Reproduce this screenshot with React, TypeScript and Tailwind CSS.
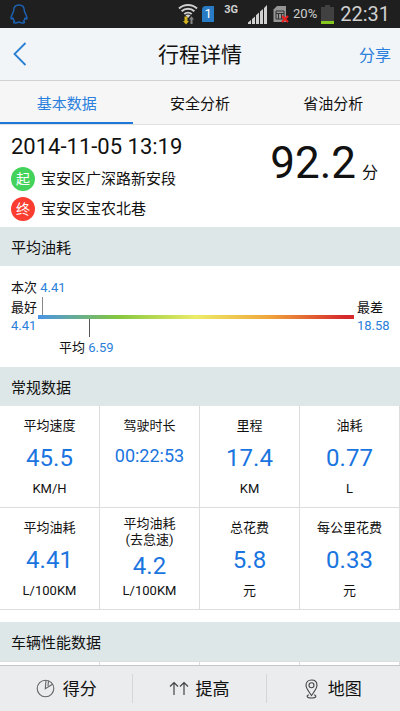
import React, { useState } from "react";

interface Metric {
  label: string;
  note?: string;
  value: string;
  unit?: string;
}

const TABS = ["基本数据", "安全分析", "省油分析"];

const METRICS: Metric[] = [
  { label: "平均速度", value: "45.5", unit: "KM/H" },
  { label: "驾驶时长", value: "00:22:53" },
  { label: "里程", value: "17.4", unit: "KM" },
  { label: "油耗", value: "0.77", unit: "L" },
  { label: "平均油耗", value: "4.41", unit: "L/100KM" },
  { label: "平均油耗", note: "(去怠速)", value: "4.2", unit: "L/100KM" },
  { label: "总花费", value: "5.8", unit: "元" },
  { label: "每公里花费", value: "0.33", unit: "元" },
];

function StatusBar() {
  return (
    <div className="flex h-7 shrink-0 items-center bg-[#1f1f1f] pr-2.5 pl-2.5 text-[#d0d0d0]">
      <svg width="18" height="20" viewBox="0 0 18 20" fill="none" stroke="#1d62b5" strokeWidth="1.4" strokeLinejoin="round">
        <path d="M9 1C5.600 1 3.700 3.300 3.700 6.400C3.700 8.600 1 11 1 14.200C1 15.500 2 15.300 3 14C3.200 15.300 3.800 16.300 4.600 17C3.200 17.400 3 19 5 19C6.800 19 8 18.600 9 17.900C10 18.600 11.200 19 13 19C15 19 14.800 17.400 13.400 17C14.200 16.300 14.800 15.300 15 14C16 15.300 17 15.500 17 14.200C17 11 14.300 8.600 14.300 6.400C14.300 3.300 12.400 1 9 1Z" />
      </svg>

      <div className="ml-auto flex items-center">
        {/* wifi */}
        <svg width="20" height="22" viewBox="0 0 20 22" fill="none">
          <g stroke="#d0d0d0" strokeWidth="2">
            <path d="M1 5.500C6 0.800 14 0.800 19 5.500" />
            <path d="M3.600 8.300C7.200 5 12.800 5 16.400 8.300" />
            <path d="M6.300 11C8.400 9.200 11.600 9.200 13.700 11" />
          </g>
          <path d="M7.500 12.300Q10 10.600 12.500 12.300L10 15Z" fill="#d0d0d0" />
          <path d="M6.500 13.500H9.500V18H11L8 21.500L5 18H6.500Z" fill="#d3b41d" />
          <path d="M12.500 21V16.500H11L13.500 13.200L16 16.500H14.500V21Z" fill="#858585" />
        </svg>
        {/* sim 1 */}
        <div className="ml-1 flex h-4 w-3 items-center justify-center rounded-tl-sm bg-[#287bc4] text-[13px] leading-4 text-white">
          1
        </div>
        <span className="ml-2.5 self-start pt-0.5 text-[11px] leading-4 font-bold">3G</span>
        {/* signal */}
        <svg className="ml-2.5" width="19" height="19" viewBox="0 0 19 19" fill="#d0d0d0">
          <path d="M0 19V17.500L3 15V19ZM4 19V14L7 11.500V19ZM8 19V10.200L11 7.500V19ZM12 19V6.500L15 4V19ZM16 19V3L19 0V19Z" />
        </svg>
        {/* sim missing */}
        <svg className="ml-1.5" width="16" height="18" viewBox="0 0 16 18">
          <path d="M4 1H13V17H0.500V4.500Z" fill="#949494" />
          <path d="M3 6H11V14H3ZM3 8.500H11M5.500 8.500V14M8.500 8.500V14" fill="none" stroke="#333" strokeWidth="1" />
          <path d="M9 11L15 17M15 11L9 17" stroke="#ee1c1c" strokeWidth="2" />
        </svg>
        <span className="ml-1 text-[13px] leading-5">20%</span>
        {/* battery */}
        <svg className="ml-1" width="13" height="19" viewBox="0 0 13 19">
          <path d="M4 0H9V2H13V19H0V2H4Z" fill="#414141" />
          <path d="M0 16H13V19H0Z" fill="#86c81f" />
        </svg>
        <span className="ml-1.5 text-xl leading-7">22:31</span>
      </div>
    </div>
  );
}

function SectionTitle({ children }: { children: React.ReactNode }) {
  return (
    <h2 className="bg-[#dee7e8] px-[11px] pt-[9px] pb-1.5 text-[15px] leading-6">
      {children}
    </h2>
  );
}

function FuelScale() {
  return (
    <div className="px-[11px] pt-[13px] pb-2.5 text-[13px] leading-[18px]">
      <p>
        本次 <span className="text-[#2a7fd8]">4.41</span>
      </p>
      <div className="mt-0.5 flex items-center">
        <div className="w-[27px] whitespace-nowrap">
          <p>最好</p>
          <p className="text-[#2a7fd8]">4.41</p>
        </div>
        <div className="relative h-1 flex-1 bg-[linear-gradient(to_right,#4a94e6_0%,#84c63e_25%,#ecec68_50%,#f0a63c_73%,#d6292b_97%)]">
          <span className="absolute bottom-full left-1 h-[18px] w-px bg-[#888]" />
          <span className="absolute top-full left-[16%] h-[18px] w-px bg-[#555]" />
        </div>
        <div className="ml-[3px] w-8 whitespace-nowrap">
          <p>最差</p>
          <p className="text-[#2a7fd8]">18.58</p>
        </div>
      </div>
      <p className="mt-1 ml-12">
        平均 <span className="text-[#2a7fd8]">6.59</span>
      </p>
    </div>
  );
}

function MetricCell({ metric }: { metric: Metric }) {
  const { label, note, value, unit } = metric;

  return (
    <div className="flex h-[102px] flex-col items-center border-r border-b border-[#dcdddd] text-[13px] leading-4">
      <div className={note ? "pt-2 text-center" : "pt-3 text-center"}>
        <p>{label}</p>
        {note && <p>{note}</p>}
      </div>
      <p
        className={`text-[#1a75e0] ${
          unit ? "text-2xl leading-8" : "text-lg leading-7"
        } ${note ? "mt-0.5" : "mt-2"}`}
      >
        {value}
      </p>
      {unit && <p className="mt-auto mb-2.5">{unit}</p>}
    </div>
  );
}

export default function App() {
  const [activeTab, setActiveTab] = useState(0);

  return (
    <div className="flex h-screen flex-col overflow-hidden bg-white font-['Roboto','Noto_Sans_CJK_SC',sans-serif] text-[#111]">
      <StatusBar />

      {/* Title bar */}
      <header className="grid h-[53px] shrink-0 grid-cols-3 items-center border-b border-[#cfd1d3] bg-[#f2f5f7] px-[9px]">
        <button aria-label="返回" className="w-10 pl-1">
          <svg width="14" height="24" viewBox="0 0 14 24" fill="none" stroke="#2680d4" strokeWidth="1.8">
            <path d="M12.500 1L1.500 12L12.500 23" />
          </svg>
        </button>
        <h1 className="pt-0.5 text-center text-[21px] leading-7">行程详情</h1>
        <button className="justify-self-end pt-1 text-base leading-6 text-[#2a80dc]">分享</button>
      </header>

      {/* Tabs */}
      <nav className="grid h-11 shrink-0 grid-cols-3 border-b border-[#dfdfdf] bg-[#f6f6f6]">
        {TABS.map((tab, index) => (
          <button
            key={tab}
            onClick={() => setActiveTab(index)}
            className={`border-b-2 pt-1 text-[15px] leading-5 ${
              activeTab === index
                ? "border-[#1f78d8] text-[#2a80dc]"
                : "border-transparent"
            }`}
          >
            {tab}
          </button>
        ))}
      </nav>

      <main className="min-h-0 flex-1 overflow-y-auto [scrollbar-width:none]">
        {/* Trip summary */}
        <section className="flex justify-between pt-2 pr-[22px] pb-1.5 pl-[11px]">
          <div>
            <p className="text-[22px] leading-7">2014-11-05 13:19</p>
            <p className="mt-1.5 flex items-center gap-1.5 text-[15px] leading-6">
              <span className="flex size-6 items-center justify-center rounded-full bg-[#43d35c] text-sm text-white">起</span>
              宝安区广深路新安段
            </p>
            <p className="mt-1.5 flex items-center gap-1.5 text-[15px] leading-6">
              <span className="flex size-6 items-center justify-center rounded-full bg-[#fb3c30] text-sm text-white">终</span>
              宝安区宝农北巷
            </p>
          </div>
          <p className="pt-1 text-[44px] leading-[52px]">
            92.2<span className="ml-1.5 text-base">分</span>
          </p>
        </section>

        <SectionTitle>平均油耗</SectionTitle>
        <FuelScale />

        <SectionTitle>常规数据</SectionTitle>
        <section className="grid grid-cols-4">
          {METRICS.map((metric, index) => (
            <MetricCell key={index} metric={metric} />
          ))}
        </section>

        <div className="mt-3">
          <SectionTitle>车辆性能数据</SectionTitle>
          <div className="grid h-10 grid-cols-4 border-t border-[#dcdddd]">
            <div className="border-r border-[#dcdddd]" />
            <div className="border-r border-[#dcdddd]" />
            <div className="border-r border-[#dcdddd]" />
            <div className="border-r border-[#dcdddd]" />
          </div>
        </div>
      </main>

      {/* Bottom actions */}
      <footer className="grid h-[46px] shrink-0 grid-cols-3 border-t border-[#c5c6c8] bg-[#ebecee] py-2 text-[17px] leading-6">
        <button className="flex items-center justify-center gap-2 border-r border-[#d5d6d8]">
          <svg width="19" height="19" viewBox="0 0 19 19" fill="none" stroke="#666" strokeWidth="1.1">
            <circle cx="9.500" cy="9.500" r="8.300" />
            <path d="M10 1.200L9.300 9.800L16.500 5.200M12.500 1.800L12 7" />
          </svg>
          得分
        </button>
        <button className="flex items-center justify-center gap-1.5 border-r border-[#d5d6d8]">
          <svg width="20" height="15" viewBox="0 0 20 15" fill="none" stroke="#444" strokeWidth="1.2">
            <path d="M5 14V1.500M1 5.500L5 1.500L9 5.500M15 14V1.500M11 5.500L15 1.500L19 5.500" />
          </svg>
          提高
        </button>
        <button className="flex items-center justify-center gap-2.5">
          <svg width="13" height="20" viewBox="0 0 13 20" fill="none" stroke="#444" strokeWidth="1.1">
            <path d="M6.500 16.500C4.500 13.500 1 9.500 1 6.300C1 3 3.300 1 6.500 1S12 3 12 6.300C12 9.500 8.500 13.500 6.500 16.500Z" />
            <circle cx="6.500" cy="6.300" r="2.500" />
            <path d="M4 15.800C1 16.500 1.500 19 6.500 19S12 16.500 9 15.800" />
          </svg>
          地图
        </button>
      </footer>
    </div>
  );
}
